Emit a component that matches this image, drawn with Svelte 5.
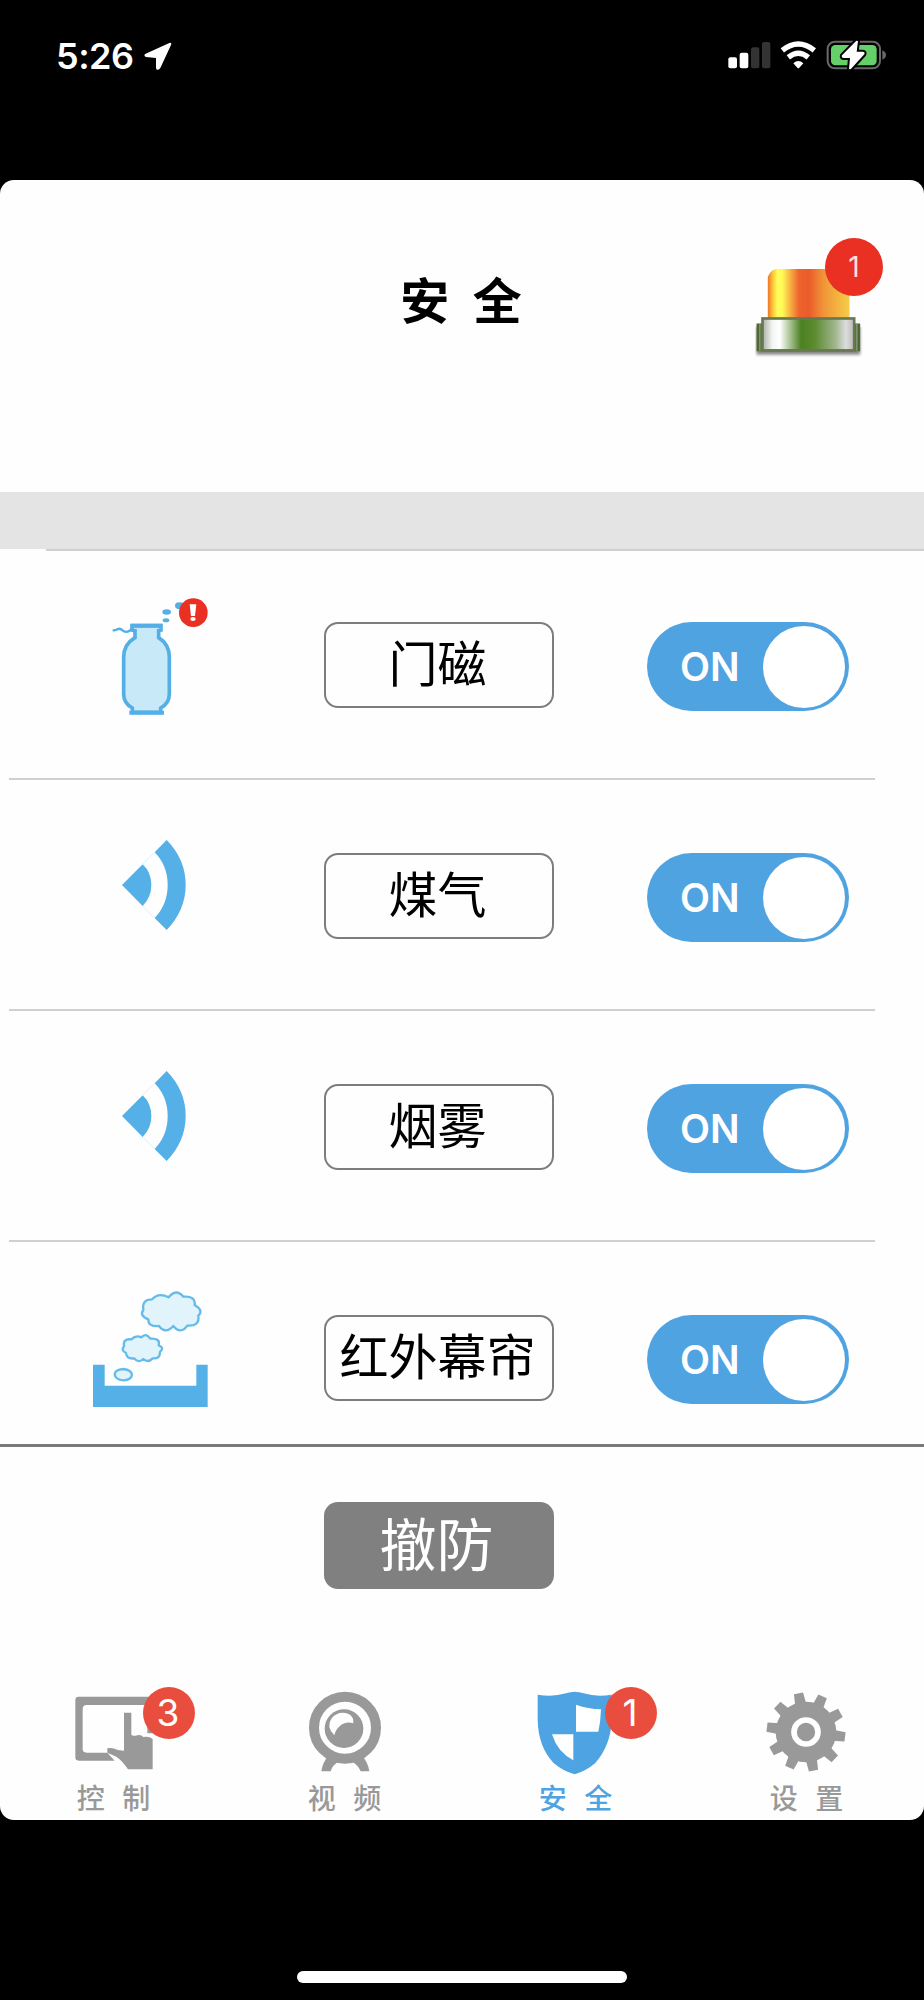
<script lang="ts">
	type Sensor = { name: string; icon: 'bottle' | 'wave' | 'smoke'; on: boolean };
	type Tab = { id: string; label: string; viewBox: string; badge?: number };

	let sensors: Sensor[] = $state([
		{ name: '门磁', icon: 'bottle', on: true },
		{ name: '煤气', icon: 'wave', on: true },
		{ name: '烟雾', icon: 'wave', on: true },
		{ name: '红外幕帘', icon: 'smoke', on: true }
	]);

	const tabs: Tab[] = [
		{ id: 'control', label: '控 制', viewBox: '18 42 360 276', badge: 3 },
		{ id: 'video', label: '视 频', viewBox: '711 42 360 276' },
		{ id: 'security', label: '安 全', viewBox: '24 43 360 276', badge: 1 },
		{ id: 'settings', label: '设 置', viewBox: '717 42 360 276' }
	];

	let active = $state('security');

	// Gear teeth, ten of them, slightly rotated
	const teeth = Array.from({ length: 10 }, (_, i) => i * 36 - 11);
</script>

<div class="phone">
	<div class="status-bar">
		<span class="time">5:26</span>
		<svg class="location" viewBox="0 0 84 84">
			<path d="M5 35 L76 3 Q84 0 81 9 L49 78 Q46 84 39 83 Q36 82 36 77 L36 48 L6 45 Q-3 40 5 35Z" fill="#fff" />
		</svg>
		<svg class="signals" viewBox="0 0 480 90">
			<rect x="1" y="49" width="26" height="33" rx="6" fill="#fff" />
			<rect x="35" y="35" width="26" height="47" rx="6" fill="#fff" />
			<rect x="69" y="19" width="25" height="63" rx="6" fill="#333" />
			<rect x="102" y="3" width="25" height="79" rx="6" fill="#333" />
			<g fill="none" stroke="#fff" stroke-width="16">
				<path d="M163 28 Q211 -10 259 28" />
				<path d="M181 49 Q211 25 241 49" />
			</g>
			<path d="M196 67 Q211 53 226 67 L214 80 Q211 83 208 80Z" fill="#fff" />
			<rect x="299" y="2" width="157" height="80" rx="22" fill="none" stroke="#686868" stroke-width="6" />
			<rect x="309" y="12" width="137" height="61" rx="13" fill="#65cf69" />
			<path d="M463 28 Q474 33 474 42 Q474 51 463 56Z" fill="#686868" />
			<path
				d="M385 -1 L342 43 Q339 50 347 51 L366 51 L363 84 L368 85 L409 40 Q412 33 404 32 L386 32 L390 0Z"
				fill="#fff"
				stroke="#000"
				stroke-width="12"
				stroke-linejoin="round"
				paint-order="stroke"
			/>
		</svg>
	</div>

	<div class="screen">
		<header>
			<h1>安 全</h1>
			<div class="alarm">
				<svg viewBox="0 0 330 280">
					<defs>
						<linearGradient id="lamp">
							<stop offset="0" stop-color="#ef7426" />
							<stop offset=".06" stop-color="#fbc53a" />
							<stop offset=".12" stop-color="#ffff58" />
							<stop offset=".18" stop-color="#fff854" />
							<stop offset=".38" stop-color="#ee642e" />
							<stop offset=".5" stop-color="#ea5b2a" />
							<stop offset=".68" stop-color="#f09438" />
							<stop offset="1" stop-color="#f5cd48" />
						</linearGradient>
						<linearGradient id="base">
							<stop offset="0" stop-color="#a9afa4" />
							<stop offset=".11" stop-color="#f4f6f3" />
							<stop offset=".19" stop-color="#fff" />
							<stop offset=".42" stop-color="#4c8121" />
							<stop offset=".57" stop-color="#5b8b31" />
							<stop offset=".8" stop-color="#a3b690" />
							<stop offset=".91" stop-color="#ddd" />
							<stop offset="1" stop-color="#b8b8b8" />
						</linearGradient>
						<filter id="soft"><feGaussianBlur stdDeviation="5" /></filter>
						<filter id="edge"><feGaussianBlur stdDeviation="2" /></filter>
					</defs>
					<rect x="4" y="180" width="312" height="84" fill="#666" opacity=".8" filter="url(#soft)" />
					<g filter="url(#edge)">
						<path d="M38 158 V30 Q44 12 62 6 H284 V158Z" fill="url(#lamp)" />
						<path d="M4 170 H316 V254 H4Z" fill="#506936" />
						<path d="M14 170 V252 M306 170 V252" stroke="#8a9a7b" stroke-width="4" />
						<rect x="22" y="155" width="276" height="96" fill="url(#base)" stroke="#67794f" stroke-width="8" />
					</g>
				</svg>
				<span class="alarm-count">1</span>
			</div>
		</header>

		<div class="band"></div>

		<main class="list">
			<div class="top-line"></div>
			{#each sensors as sensor}
				<div class="row">
					<svg class="sensor-icon" viewBox="0 0 480 480">
						{#if sensor.icon === 'bottle'}
							<g fill="none" stroke="#53afe6">
								<path
									d="M156 137 H243 V150 L236 152 V173 Q268 193 268 232 V342 Q268 370 242 384 V397 H157 V384 Q131 370 131 342 V232 Q131 193 165 173 V152 L156 150Z"
									fill="#c8e9f8"
									stroke-width="11"
								/>
								<path d="M153 137 H246 M148 398 H252" stroke-width="12" />
								<path d="M98 152 L108 150 Q119 141 129 152 Q141 160 151 150 L169 151" stroke-width="7" />
							</g>
							<g fill="#53afe6">
								<ellipse cx="260" cy="96" rx="13" ry="8" />
								<ellipse cx="258" cy="121" rx="10" ry="6" />
								<ellipse cx="299" cy="77" rx="14" ry="10" />
							</g>
							<circle cx="340" cy="98" r="43" fill="#e93023" />
							<path d="M329 73 H349 L345 108 H333Z" fill="#fff" />
							<ellipse cx="339" cy="117" rx="8" ry="6" fill="#fff" />
						{:else if sensor.icon === 'wave'}
							<g fill="#54b0e7">
								<path d="M126 222 L188 160 Q214 184 214 222 Q214 259 188 285Z" />
								<path d="M260 87 Q317 145 317 222 Q317 298 260 357 L224 321 Q263 280 263 222 Q263 164 224 124Z" />
							</g>
							<path d="M188 160 L224 124 M188 285 L224 321" stroke="#ddf1fb" stroke-width="3" />
						{:else}
							<g transform="translate(-30 -9)">
								<path d="M69 284 H104 V347 H379 V284 H413 V411 H69Z" fill="#54b0e7" />
								<g fill="#e1f3fb" stroke="#65bbea" stroke-width="7" stroke-linejoin="round">
									<path
										d="M220 120 Q215 88 246 88 Q265 66 296 82 Q318 54 340 80 Q377 77 374 105 Q402 122 385 137 Q390 169 352 167 Q332 195 310 168 Q286 194 267 168 Q233 170 235 148 Q207 137 220 120Z"
									/>
									<path
										d="M162 229 Q158 205 184 208 Q198 194 214 202 Q228 187 241 206 Q272 204 266 226 Q285 234 270 246 Q270 268 248 265 Q234 280 220 267 Q205 281 193 265 Q169 268 168 249 Q152 241 162 229Z"
									/>
									<path d="M134 313 Q135 299 160 297 Q184 300 186 314 Q184 330 160 331 Q136 329 134 313Z" />
								</g>
							</g>
						{/if}
					</svg>
					<button class="name">{sensor.name}</button>
					<button class="toggle" class:off={!sensor.on} onclick={() => (sensor.on = !sensor.on)}>
						<span class="toggle-text">{sensor.on ? 'ON' : 'OFF'}</span>
						<span class="knob"></span>
					</button>
				</div>
			{/each}
		</main>

		<footer>
			<button class="disarm">撤防</button>

			<nav>
				{#each tabs as tab}
					<button class="tab" class:active={active === tab.id} onclick={() => (active = tab.id)}>
						<svg viewBox={tab.viewBox} fill="currentColor">
							{#if tab.id === 'control'}
								<path
									fill-rule="evenodd"
									d="M86 80 H308 V190 H292 V105 H110 Q98 105 98 117 V238 Q98 248 110 248 H172 L194 272 H86 Q76 272 76 262 V90 Q76 80 86 80Z"
								/>
								<path
									d="M222 128 H244 V194 Q251 200 262 196 Q272 192 280 201 Q298 198 308 207 V298 H234 Q217 272 199 260 L172 248 V235 Q188 232 203 240 L222 242Z"
								/>
							{:else if tab.id === 'video'}
								<circle cx="885" cy="173" r="93" fill="none" stroke="currentColor" stroke-width="30" />
								<path d="M837 255 L868 273 Q846 286 842 304 H814 Q818 276 837 255Z" />
								<path d="M934 255 L904 273 Q925 286 932 304 H958 Q954 276 934 255Z" />
								<circle cx="882" cy="176" r="58" />
								<path d="M853 196 Q827 170 845 145 Q864 122 894 131 Q912 139 910 160 Q886 153 869 169 Q857 179 853 196Z" fill="#fff" />
							{:else if tab.id === 'security'}
								<path
									d="M83 75 Q128 83 168 71 Q194 62 221 71 Q260 83 305 75 V150 Q303 225 256 280 Q228 304 194 314 Q159 304 130 279 Q84 229 83 150Z"
								/>
								<path d="M198 105 Q235 118 273 119 Q272 155 265 186 H198Z M126 194 H190 V272 Q142 247 126 194Z" fill="#fff" />
							{:else}
								<g transform="translate(888 186)">
									{#each teeth as angle}
										<path d="M-17 -80 L-14 -118 H14 L17 -80Z" transform="rotate({angle})" />
									{/each}
									<circle r="91" />
									<circle r="36" fill="none" stroke="#fff" stroke-width="17" />
								</g>
							{/if}
						</svg>
						<span class="tab-label">{tab.label}</span>
						{#if tab.badge}
							<span class="tab-badge">{tab.badge}</span>
						{/if}
					</button>
				{/each}
			</nav>
		</footer>
	</div>

	<div class="home-indicator"></div>
</div>

<style>
	:global(body) {
		background: #000;
	}

	.phone {
		width: 924px;
		height: 2000px;
		box-sizing: border-box;
		overflow: hidden;
		background: #000;
		font-family: Inter, 'Noto Sans CJK SC', sans-serif;
	}

	button {
		padding: 0;
		border: none;
		background: none;
		font-family: inherit;
		cursor: pointer;
	}

	svg {
		display: block;
	}

	.status-bar {
		height: 180px;
		display: flex;
		align-items: flex-start;
		padding: 41px 36px 0 56px;
		box-sizing: border-box;
		color: #fff;
	}

	.time {
		width: 88px;
		font-size: 36px;
		font-weight: 600;
		line-height: 31px;
		letter-spacing: -0.5px;
	}

	.location {
		width: 28px;
		height: 28px;
		margin-top: 1px;
	}

	.signals {
		width: 160px;
		height: 30px;
		margin-left: auto;
		overflow: visible;
	}

	.screen {
		height: 1640px;
		display: flex;
		flex-direction: column;
		background: #fefefe;
		border-radius: 14px;
		overflow: hidden;
	}

	header {
		position: relative;
		height: 312px;
		flex: none;
	}

	h1 {
		margin: 0;
		padding: 86px 2px 0 0;
		text-align: center;
		font-size: 49px;
		font-weight: 700;
		line-height: 72px;
		word-spacing: 12px;
	}

	.alarm {
		position: absolute;
		top: 87px;
		left: 755px;
	}

	.alarm svg {
		width: 110px;
		height: 93px;
	}

	.alarm-count {
		position: absolute;
		left: 70px;
		top: -29px;
		width: 58px;
		height: 58px;
		border-radius: 50%;
		background: #e93023;
		color: #fbe3e0;
		font-size: 28px;
		line-height: 58px;
		text-align: center;
	}

	.band {
		height: 57px;
		flex: none;
		background: #e4e4e4;
	}

	.list {
		height: 895px;
		flex: none;
		overflow: hidden;
	}

	.top-line {
		height: 2px;
		margin: 0 0 -2px 46px;
		background: #d0d0d0;
	}

	.row {
		height: 231px;
		box-sizing: border-box;
		margin: 0 49px 0 9px;
		padding: 31px 0 0 71px;
		display: flex;
		align-items: flex-start;
		border-bottom: 2px solid #d0d0d0;
	}

	.sensor-icon {
		width: 160px;
		height: 160px;
	}

	.name {
		width: 230px;
		height: 86px;
		margin: 42px 93px 0 84px;
		padding-right: 3px;
		border: 2.5px solid #7d7d7d;
		border-radius: 14px;
		color: #000;
		font-size: 49px;
		line-height: 80px;
		white-space: nowrap;
	}

	.toggle {
		width: 202px;
		height: 89px;
		margin-top: 42px;
		padding: 0 4px 0 33px;
		box-sizing: border-box;
		display: flex;
		align-items: center;
		justify-content: space-between;
		border-radius: 45px;
		background: #50a3e1;
		color: #fff;
	}

	.toggle.off {
		background: #999;
	}

	.toggle-text {
		font-size: 39px;
		font-weight: 600;
	}

	.knob {
		width: 82px;
		height: 82px;
		border-radius: 50%;
		background: #fff;
	}

	footer {
		flex: 1;
		display: flex;
		flex-direction: column;
		align-items: center;
		justify-content: space-between;
		border-top: 3px solid #7a7a7a;
	}

	.disarm {
		width: 230px;
		height: 87px;
		margin-top: 55px;
		margin-right: 46px;
		padding-right: 5px;
		border-radius: 14px;
		background: #808080;
		color: #fff;
		font-size: 57px;
		line-height: 84px;
	}

	nav {
		width: 100%;
		display: grid;
		grid-template-columns: repeat(4, 1fr);
	}

	.tab {
		position: relative;
		height: 136px;
		display: flex;
		flex-direction: column;
		align-items: center;
		color: #999;
	}

	.tab svg {
		width: 120px;
		height: 92px;
	}

	.tab-label {
		margin: 2px 4px 0 0;
		font-size: 28px;
		font-weight: 500;
		line-height: 42px;
		word-spacing: 10px;
	}

	.active {
		color: #4ea3e3;
	}

	.tab-badge {
		position: absolute;
		left: 143px;
		top: 3px;
		width: 52px;
		height: 52px;
		border-radius: 50%;
		background: #e94d3d;
		color: #fff;
		font-size: 37px;
		line-height: 52px;
		text-align: center;
		text-indent: -2px;
	}

	.home-indicator {
		width: 330px;
		height: 12px;
		margin: 151px auto 0;
		border-radius: 6px;
		background: #fff;
	}
</style>
